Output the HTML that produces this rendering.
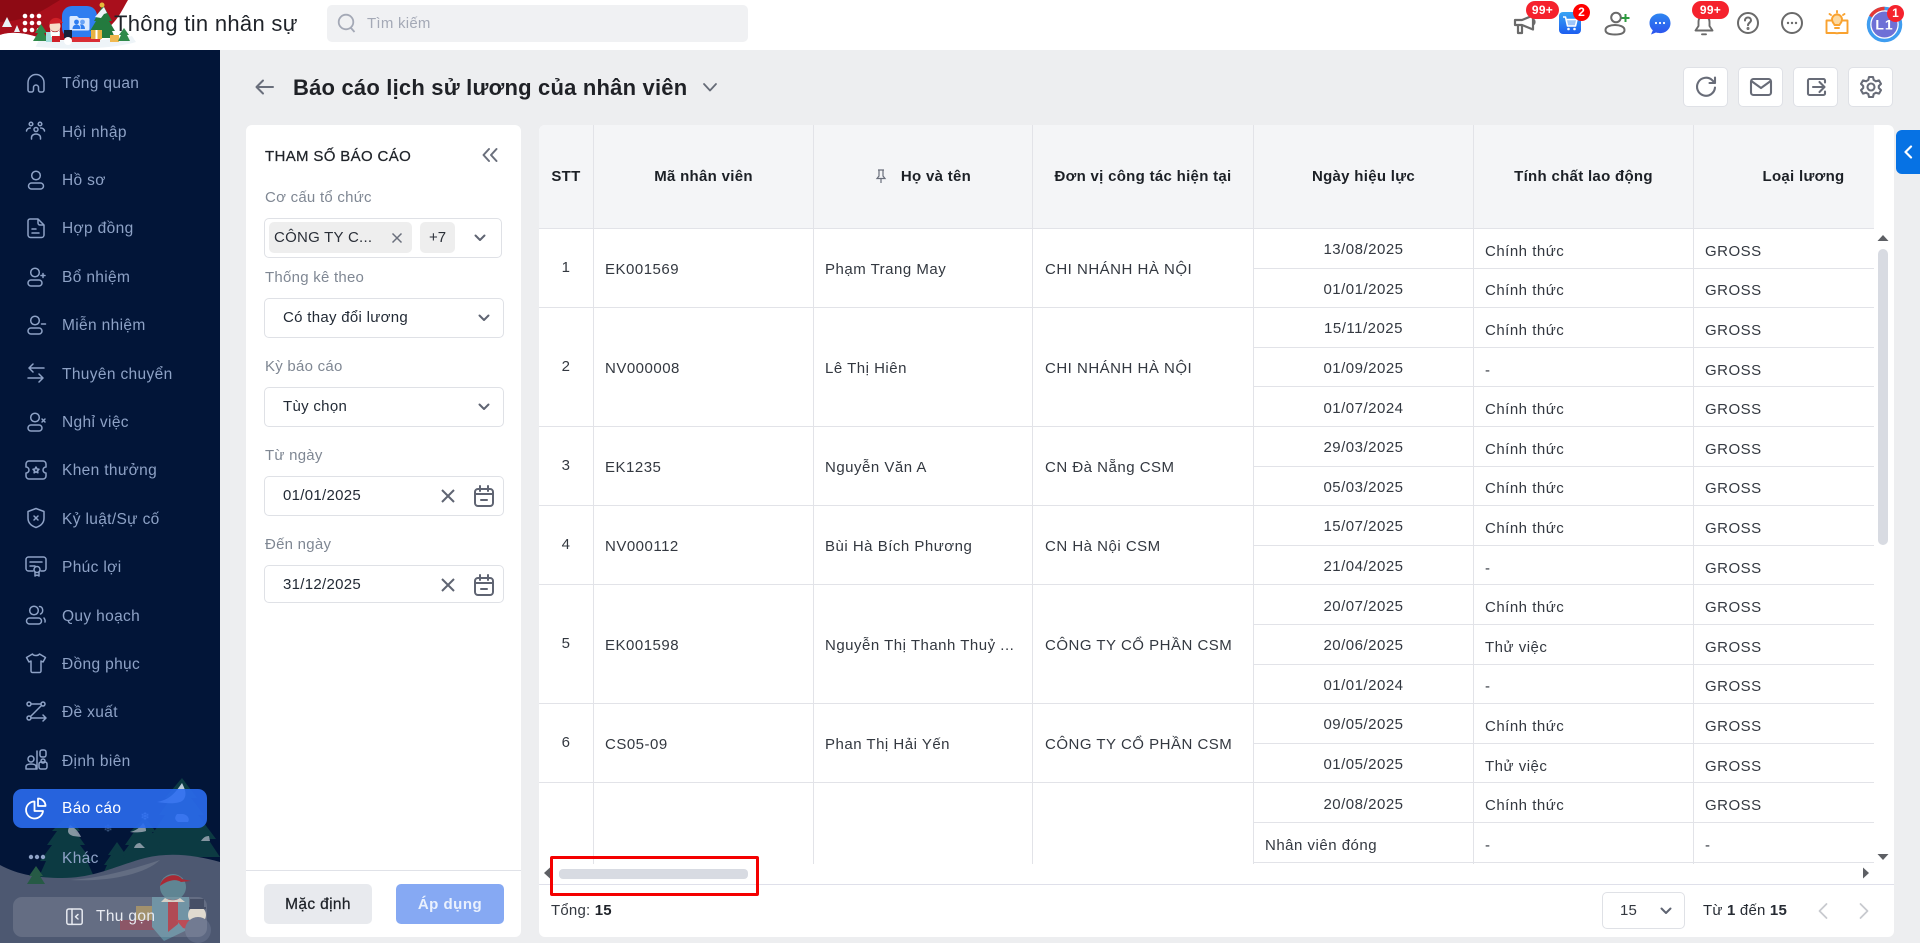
<!DOCTYPE html>
<html lang="vi"><head><meta charset="utf-8"><title>Báo cáo lịch sử lương của nhân viên</title>
<style>
*{box-sizing:border-box}
html,body{margin:0;padding:0;width:1920px;height:943px;overflow:hidden;background:#edeef0;font-family:"Liberation Sans",sans-serif;color:#1f2329}
.a{position:absolute}
svg{display:block;overflow:visible}
#top{left:0;top:0;width:1920px;height:50px;background:#fff}
#side{left:0;top:50px;width:220px;height:893px;background:#021538}
.mi{position:absolute;left:62px;font-size:15.5px;letter-spacing:.35px;color:#8ea2c6;line-height:20px;white-space:nowrap;z-index:3}
.ic{position:absolute;left:24px;width:24px;height:24px;fill:none;stroke:#8ea2c6;stroke-width:1.5;stroke-linecap:round;stroke-linejoin:round;z-index:3}
.panel{background:#fff;border-radius:6px}
.lab{position:absolute;left:265px;font-size:15px;letter-spacing:.25px;color:#7f8793;line-height:20px;white-space:nowrap}
.box{position:absolute;left:264px;width:240px;border:1px solid #dfe1e6;border-radius:5px;background:#fff}
.val{position:absolute;left:283px;font-size:15px;letter-spacing:.3px;color:#222a35;line-height:20px;white-space:nowrap}
.chev{position:absolute;width:12px;height:8px;fill:none;stroke:#5f6472;stroke-width:2;stroke-linecap:round;stroke-linejoin:round}
.tb{position:absolute;top:67px;width:45px;height:40px;background:#fff;border:1px solid #dfe1e6;border-radius:5px}
.tb svg{position:absolute;left:10px;top:7px;width:24px;height:24px;fill:none;stroke:#686c78;stroke-width:2.1;stroke-linecap:round;stroke-linejoin:round}
.bdg{position:absolute;background:#f5222d;color:#fff;font-weight:bold;font-size:12px;text-align:center;border-radius:10px;line-height:18px;height:18px;letter-spacing:.3px}
#wrap{left:539px;top:125px;width:1335px;height:739px;overflow:hidden;border-radius:6px 0 0 0}
table{border-collapse:separate;border-spacing:0;table-layout:fixed;width:1375px}
th{height:104px;background:#f4f5f7;border-right:1px solid #e2e3e8;border-bottom:1px solid #e2e3e8;font-size:15px;letter-spacing:.3px;color:#1c2026;font-weight:bold;padding:0;text-align:center}
td{height:39.6px;border-right:1px solid #e2e3e8;border-bottom:1px solid #e2e3e8;font-size:15px;letter-spacing:.5px;color:#333840;padding:0 0 0 11px;white-space:nowrap;overflow:hidden;background:#fff}
td.c{text-align:center;padding:3px 0 0}
td.s{padding:0 0 1px;text-align:center}
td.m{padding-top:3px}
td.n{padding-top:6px}
td.m:nth-child(4){padding-left:12px}
</style></head><body>

<div class="a" id="top">
<svg class="a" style="left:0;top:0" width="140" height="50" viewBox="0 0 140 50">
<path d="M0 0H128C122 10 118 20 108 28L100 40H0Z" fill="#a90f1c"/>
<path d="M0 0H60C40 12 30 20 0 22Z" fill="#8e0a14"/>
<path d="M0 35C12 31 26 33 40 38C60 42 100 42 132 36L136 42C110 50 60 50 30 46C18 44 8 40 0 38Z" fill="#eef4f8"/>
<path d="M0 35C12 31 26 33 40 38L34 50H0Z" fill="#fff"/>
<path d="M7 17l5 10H2zM17 25l3 7h-6z" fill="#eaf2f6"/>
<g fill="#fff"><circle cx="25" cy="16" r="2.3"/><circle cx="32" cy="16" r="2.3"/><circle cx="39" cy="16" r="2.3"/><circle cx="25" cy="23" r="2.3"/><circle cx="32" cy="23" r="2.3"/><circle cx="39" cy="23" r="2.3"/><circle cx="25" cy="30" r="2.3"/><circle cx="32" cy="30" r="2.3"/><circle cx="39" cy="30" r="2.3"/></g>
<rect x="62" y="6" width="35" height="32" rx="10" fill="#2f7df0"/>
<path d="M71 16h6l2 2h9a1.5 1.5 0 0 1 1.500 1.500V29a1.500 1.500 0 0 1-1.500 1.500H71a1.500 1.500 0 0 1-1.500-1.500V17.500A1.500 1.500 0 0 1 71 16Z" fill="#dbe9ff"/>
<circle cx="76.500" cy="22" r="2.400" fill="#2f7df0"/><circle cx="82.500" cy="22" r="2.400" fill="#6aa3f5"/><path d="M72.500 29c0-3 2-4.500 4-4.500s4 1.500 4 4.500zM81 29c0-2.500-.5-3.500-1-4.500 2.500-.5 5 .8 5 4.500z" fill="#2f7df0"/>
<path d="M66 37h34v5H66z" fill="#d92d35"/>
<path d="M41 24l6 9h-3l5 8H33l5-8h-3z" fill="#2f8a4a"/>
<rect x="46" y="32" width="14" height="10" fill="#a8e0e0"/>
<circle cx="55" cy="26" r="5.500" fill="#f7dcc8"/><path d="M49 24c1-6 8-8 12-4l2 3z" fill="#cf2028"/><path d="M50 28c2 6 8 6 10 0l-1 9h-8z" fill="#fff"/><path d="M52 36h8v6h-8z" fill="#cf2028"/>
<path d="M64 30h8v8h-8z" fill="#17213a"/><circle cx="68" cy="41" r="4" fill="#fff"/>
<path d="M103 5l9 16h-3l6 10h-3l3 7H90l3-7h-3l6-10h-2z" fill="#237a3e"/><path d="M101 10l3-3 3 6-3 1-3 4-6-1z" fill="#eef4f8"/><circle cx="102" cy="5" r="2.500" fill="#e8b93a"/>
<rect x="91" y="30" width="11" height="9" fill="#e8b342"/><rect x="95.500" y="30" width="2" height="9" fill="#fff"/>
<rect x="110" y="35" width="9" height="7" fill="#f0b84f"/>
<path d="M124 28l5 7h-2l3 6h-12l3-6h-2z" fill="#2f8a4a"/>
</svg>
<div class="a" style="left:114px;top:10px;font-size:22px;letter-spacing:.3px;line-height:28px;color:#1f2329;white-space:nowrap">Thông tin nhân sự</div>
<div class="a" style="left:327px;top:5px;width:421px;height:37px;background:#f0f1f3;border-radius:5px"></div>
<svg class="a" style="left:337px;top:13px;width:20px;height:21px;fill:none;stroke:#a4a9b6;stroke-width:1.800"><circle cx="9" cy="9" r="7.300"/><path d="M14 15l3.500 4"/></svg>
<div class="a" style="left:367px;top:14px;font-size:15px;letter-spacing:.25px;line-height:20px;color:#a4a9b6">Tìm kiếm</div>

<svg class="a" style="left:1513px;top:14px;width:24px;height:22px;fill:none;stroke:#6a6a6a;stroke-width:2.200;stroke-linejoin:round" viewBox="0 0 24 22"><path d="M2 6h7l11-4.500v14L9 11H2zM5 11v8h4v-7.500"/><path d="M20 5.500c2 1 2 4 0 5"/></svg>
<div class="bdg" style="left:1526px;top:1px;width:33px">99+</div>
<svg class="a" style="left:1559px;top:12px;width:22px;height:22px" viewBox="0 0 22 22"><defs><linearGradient id="cg" x1="0" y1="0" x2="0" y2="1"><stop offset="0" stop-color="#38a4f4"/><stop offset="1" stop-color="#1d5ef0"/></linearGradient></defs><rect width="22" height="22" rx="4" fill="url(#cg)"/><path d="M4 5h2.500l2 9h8l1.500-6.500H7" fill="none" stroke="#fff" stroke-width="1.600" stroke-linejoin="round"/><path d="M7 8h10.500l-1.200 5.500H8.300z" fill="#fff" opacity=".55"/><circle cx="9.500" cy="17" r="1.300" fill="#fff"/><circle cx="15.500" cy="17" r="1.300" fill="#fff"/></svg>
<div class="a" style="left:1573px;top:4px;width:17px;height:17px;border-radius:50%;background:#f00;color:#fff;font-weight:bold;font-size:12px;text-align:center;line-height:17px">2</div>
<svg class="a" style="left:1604px;top:11px;width:27px;height:25px;fill:none;stroke:#6a6a6a;stroke-width:2" viewBox="0 0 27 25"><circle cx="12" cy="6.500" r="4.800"/><path d="M1.500 19c0-3.500 5-5 9.500-5s9.500 1.500 9.500 5-4 4.500-9.500 4.500S1.500 22.500 1.500 19Z"/><path d="M21.500 3v8M17.500 7h8" stroke="#2d9a3e" stroke-width="2"/></svg>
<svg class="a" style="left:1649px;top:13px;width:22px;height:22px" viewBox="0 0 22 22"><defs><linearGradient id="mg" x1="0" y1="0" x2="0" y2="1"><stop offset="0" stop-color="#2f86f0"/><stop offset="1" stop-color="#2b52ee"/></linearGradient></defs><path d="M11 0.500C5 .5.500 4.500.500 10c0 3 1.200 5.500 3.300 7.300L2 21.500l5-2c1.200.4 2.600.6 4 .6 6 0 10.500-4.300 10.500-10S17 .5 11 .5Z" fill="url(#mg)"/><g fill="#fff"><circle cx="7" cy="10" r="1.100"/><circle cx="11" cy="10" r="1.100"/><circle cx="15" cy="10" r="1.100"/></g></svg>
<svg class="a" style="left:1693px;top:14px;width:22px;height:22px;fill:none;stroke:#6a6a6a;stroke-width:1.900;stroke-linejoin:round" viewBox="0 0 22 22"><path d="M11 2c-3.500 0-5.500 2.500-5.500 6v4L2.500 16.500h17L16.500 12V8c0-3.500-2-6-5.500-6Z"/><path d="M9 20.300h4" stroke-linecap="round"/></svg>
<div class="bdg" style="left:1692px;top:1px;width:37px">99+</div>
<svg class="a" style="left:1737px;top:12px;width:22px;height:22px;fill:none;stroke:#6a6a6a;stroke-width:2" viewBox="0 0 22 22"><circle cx="11" cy="11" r="10"/><path d="M8 8.500c0-2 1.400-3 3-3s3 1 3 2.800c0 2.400-3 2.400-3 5" stroke-linecap="round"/><circle cx="11" cy="16.500" r=".5" fill="#6a6a6a"/></svg>
<svg class="a" style="left:1781px;top:12px;width:22px;height:22px;fill:none;stroke:#6a6a6a;stroke-width:2" viewBox="0 0 22 22"><circle cx="11" cy="11" r="10"/><g fill="#6a6a6a" stroke="none"><circle cx="7" cy="11" r="1.200"/><circle cx="11" cy="11" r="1.200"/><circle cx="15" cy="11" r="1.200"/></g></svg>
<svg class="a" style="left:1825px;top:10px;width:24px;height:24px;fill:none;stroke:#f9a22f;stroke-width:1.900;stroke-linecap:round;stroke-linejoin:round" viewBox="0 0 24 24"><path d="M6 10.500H1.500V23h8c1.500 0 2.500.3 2.500.3s1-.3 2.500-.3h8V10.500H18"/><path d="M9.500 15c0-1-2.500-2.500-2.500-5.500a5 5 0 0 1 10 0c0 3-2.500 4.500-2.500 5.500z" fill="#fdd9a0"/><path d="M12 1v1.500M4.500 4l1.500 1M19.500 4l-1.500 1"/><path d="M10 18h4"/></svg>
<svg class="a" style="left:1866px;top:6px;width:37px;height:37px" viewBox="0 0 37 37"><circle cx="18.500" cy="18.500" r="16" fill="#fff" stroke="#3f9df0" stroke-width="3.500"/><path d="M4.600 10.500A16 16 0 0 1 18.500 2.500" fill="none" stroke="#e53935" stroke-width="3.500"/><circle cx="18.500" cy="18.500" r="13" fill="#6e70d6"/><text x="18.500" y="23.500" text-anchor="middle" font-family="Liberation Sans" font-size="14" font-weight="bold" letter-spacing="1" fill="#fff">L1</text></svg>
<div class="a" style="left:1887px;top:5px;width:17px;height:17px;border-radius:50%;background:#f5222d;color:#fff;font-weight:bold;font-size:12px;text-align:center;line-height:17px">1</div>
</div>

<div class="a" id="side"></div>
<!-- trees below the active pill -->
<svg class="a" style="left:0;top:770px;z-index:1" width="220" height="173" viewBox="0 0 220 173">
<g fill="#0c3a42">
<path d="M182 8l15 20h-6l13 17h-6l18 24h-8l12 18H146l10-18h-7l16-24h-6l12-17h-6z"/>
<path d="M68 45l12 16h-5l10 14h-5l12 16h-5l8 18H38l8-18h-6l12-16h-5l10-14h-5z"/>
<path d="M145 47l11 15h-4l9 13h-4l12 16h-5l8 16H114l8-16h-5l12-16h-4l9-13h-4z"/>
<path d="M117 72l9 13h-3l7 10h-3l5 11h-30l5-11h-3l7-10h-3z"/>
</g>
<path d="M182 13c-8 12-14 17-25 19 12 2 24 2 27-3 3-5 1-10-2-16ZM177 44c-3 4-2 6 1 8h10c2-3 0-7-5-8Z" fill="#e8f0ff" opacity=".8"/>
<path d="M70 55c-3 6-3 9 3 11l8 1c-2-5-6-9-11-12ZM143 53c-3 5-8 8-13 9 6 1 14 0 16-1 0-3-1-6-3-8ZM209 66c-4 0-6 2-8 5h9zM140 73c-3 0-5 2-6 5h11z" fill="#aeb5c2" opacity=".75"/>
<text x="145" y="50" font-size="11" fill="#b6c4dc" font-family="DejaVu Sans" text-anchor="middle">❄</text>
<text x="108" y="62" font-size="11" fill="#3f5c84" font-family="DejaVu Sans" text-anchor="middle">❄</text>
</svg>
<div class="a" style="left:13px;top:789px;width:194px;height:39px;background:rgba(42,108,240,.9);border-radius:9px;z-index:2"></div>
<svg class="a" style="left:0;top:770px;z-index:2" width="220" height="173" viewBox="0 0 220 173">
<path d="M0 95C18 105 40 108 62 108 95 108 115 96 145 88 170 82 195 85 220 92V173H0Z" fill="#4d5871"/>
<path d="M70 110c30-2 60-10 90-20-15 14-50 22-90 20Z" fill="#636d82"/>
<path d="M36 96l7 10h-3l5 8H27l5-8h-3z" fill="#265a45"/>
<path d="M120 150h45v10h-45z" fill="#8f3244" opacity=".7"/><rect x="136" y="136" width="17" height="14" fill="#b3934f" opacity=".7"/>
<path d="M152 127h37v32l-25 12-12-14z" fill="#5c8598"/><path d="M168 127h10v27l-10 8z" fill="#a5303c"/>
<circle cx="173" cy="117" r="13" fill="#5f8593"/><path d="M160 116c2-11 17-14 22-7l9 2-10 1c-6-4-14-1-21 4Z" fill="#a82a35"/><path d="M165 128c5 3 11 3 15 0l5 4H161z" fill="#cfc9bf"/>
<path d="M176 150h22v12l-15-4z" fill="#b3323e"/>
<circle cx="197" cy="145" r="9" fill="#dcd5c8"/><path d="M190 137v-8h14v8z" fill="#2b3550"/><path d="M189 137h17v2h-17z" fill="#2b3550"/>
<circle cx="198" cy="160" r="13" fill="#5d6882"/>
</svg>
<div class="a" style="left:13px;top:897px;width:194px;height:40px;background:rgba(255,255,255,.13);border-radius:9px;z-index:2"></div>
<svg class="a" style="left:66px;top:908px;width:18px;height:18px;z-index:3;fill:none;stroke:#e6e9f0;stroke-width:1.500;stroke-linejoin:round;stroke-linecap:round"><rect x=".8" y="1" width="15.400" height="15.400" rx="2"/><path d="M6 1v15.400M12 6.500L9.500 8.700 12 11"/></svg>
<div class="mi" style="left:96px;top:907px;color:#e8ebf2">Thu gọn</div>

<svg class="ic" style="top:71px" viewBox="0 0 24 24"><path d="M4 19v-7c0-5 3.500-8.500 8-8.500s8 3.500 8 8.500v7a2 2 0 0 1-2 2h-1.500a2 2 0 0 1-2-2v-2.500a2.500 2.500 0 0 0-5 0V19a2 2 0 0 1-2 2H6a2 2 0 0 1-2-2Z"/></svg>
<div class="mi" style="top:74px">Tổng quan</div>
<svg class="ic" style="top:119px" viewBox="0 0 24 24"><circle cx="7" cy="5" r="1.800"/><circle cx="16" cy="5" r="1.800"/><circle cx="12" cy="10.500" r="2"/><path d="M2.500 12c.3-2 2-3 3.800-3M20.500 12c-.3-2-2-3-3.800-3M7.500 20v-1.500c0-2 2-3.500 4.500-3.500s4.500 1.500 4.500 3.500V20"/></svg>
<div class="mi" style="top:123px">Hội nhập</div>
<svg class="ic" style="top:168px" viewBox="0 0 24 24"><circle cx="12" cy="7.500" r="4.300"/><rect x="4.500" y="15" width="15" height="6" rx="3"/></svg>
<div class="mi" style="top:171px">Hồ sơ</div>
<svg class="ic" style="top:216px" viewBox="0 0 24 24"><path d="M6 3h8l6 6v10a2.500 2.500 0 0 1-2.500 2.500h-11A2.500 2.500 0 0 1 4 19V5a2 2 0 0 1 2-2Z"/><path d="M14 3.500V7a2 2 0 0 0 2 2h3.500M8 13h4M8 17h7"/></svg>
<div class="mi" style="top:219px">Hợp đồng</div>
<svg class="ic" style="top:265px" viewBox="0 0 24 24"><circle cx="11" cy="7.500" r="4.300"/><rect x="4" y="15" width="14" height="6" rx="3"/><path d="M19 8.500v4M17 10.500h4"/></svg>
<div class="mi" style="top:268px">Bổ nhiệm</div>
<svg class="ic" style="top:313px" viewBox="0 0 24 24"><circle cx="11" cy="7.500" r="4.300"/><rect x="4" y="15" width="14" height="6" rx="3"/><path d="M17.500 11h4"/></svg>
<div class="mi" style="top:316px">Miễn nhiệm</div>
<svg class="ic" style="top:361px" viewBox="0 0 24 24"><path d="M9 3L5 7l4 4M5 7h15M15 13l4 4-4 4M19 17H4"/></svg>
<div class="mi" style="top:365px">Thuyên chuyển</div>
<svg class="ic" style="top:410px" viewBox="0 0 24 24"><circle cx="11" cy="7.500" r="4.300"/><rect x="4" y="15" width="14" height="6" rx="3"/><path d="M18 9l3 3M21 9l-3 3"/></svg>
<div class="mi" style="top:413px">Nghỉ việc</div>
<svg class="ic" style="top:458px" viewBox="0 0 24 24"><path d="M5 3h14a3 3 0 0 1 3 3v3a3 3 0 0 0 0 6v3a3 3 0 0 1-3 3H5a3 3 0 0 1-3-3v-3a3 3 0 0 0 0-6V6a3 3 0 0 1 3-3Z"/><path d="M12 9l1 2 2 .300-1.500 1.500.4 2-1.900-1-1.900 1 .4-2L9 11.300l2-.3z"/></svg>
<div class="mi" style="top:461px">Khen thưởng</div>
<svg class="ic" style="top:506px" viewBox="0 0 24 24"><path d="M12 2.500l8 3v6.500c0 5-3.500 8-8 9.500-4.500-1.500-8-4.500-8-9.500V5.500z"/><path d="M10 10l4 4M14 10l-4 4"/></svg>
<div class="mi" style="top:510px">Kỷ luật/Sự cố</div>
<svg class="ic" style="top:554px" viewBox="0 0 24 24"><path d="M9 17H4.500A2.500 2.500 0 0 1 2 14.500v-9A2.500 2.500 0 0 1 4.500 3h15A2.500 2.500 0 0 1 22 5.500v9a2.500 2.500 0 0 1-2.500 2.500H17"/><path d="M6 8h12M6 12h5"/><circle cx="13" cy="15.500" r="3"/><path d="M11 18v4l2-1 2 1v-4"/></svg>
<div class="mi" style="top:558px">Phúc lợi</div>
<svg class="ic" style="top:603px" viewBox="0 0 24 24"><circle cx="10" cy="7.500" r="4.300"/><rect x="2.500" y="15" width="15" height="6" rx="3"/><path d="M15.500 3.500c3.500 0 4.500 5.800 1 7.500M20 15c1 1.500 1.500 2.500 1 4"/></svg>
<div class="mi" style="top:607px">Quy hoạch</div>
<svg class="ic" style="top:651px" viewBox="0 0 24 24"><path d="M8.500 3c1 2 5.500 2 7 0l6 3.500-2.500 4.500-2-1v10a1.500 1.500 0 0 1-1.500 1.500h-7A1.500 1.500 0 0 1 7 20V10l-2 1-2.500-4.500z"/></svg>
<div class="mi" style="top:655px">Đồng phục</div>
<svg class="ic" style="top:699px" viewBox="0 0 24 24"><circle cx="5" cy="5" r="2"/><circle cx="19" cy="5" r="2"/><circle cx="5" cy="19" r="2"/><path d="M7 5h10M17.500 6.500L6.500 17.500M7 19h15M19 16l3 3-3 3"/></svg>
<div class="mi" style="top:703px">Đề xuất</div>
<svg class="ic" style="top:748px" viewBox="0 0 24 24"><circle cx="7" cy="11" r="3"/><path d="M2 21v-2.500c0-1.500 2-2.500 5-2.500s5 1 5 2.500V21zM13 3v18"/><rect x="16" y="2" width="6" height="7" rx="2"/><rect x="15" y="14" width="8" height="7" rx="2"/><circle cx="19" cy="13" r="2"/></svg>
<div class="mi" style="top:752px">Định biên</div>
<svg class="ic" style="top:796px;stroke:#fff;stroke-width:1.800" viewBox="0 0 24 24"><path d="M10.500 5.500A8.500 8.500 0 1 0 19 15h-8.500z"/><path d="M14 2.500V10h7.500C21.500 5.800 18 2.500 14 2.500Z"/></svg>
<div class="mi" style="top:799px;color:#fff">Báo cáo</div>
<svg class="a" style="left:28px;top:853px;z-index:3" width="18" height="8" fill="#8ea2c6"><circle cx="3" cy="4" r="2.200"/><circle cx="9" cy="4" r="2.200"/><circle cx="15" cy="4" r="2.200"/></svg>
<div class="mi" style="top:849px">Khác</div>

<!-- page head -->
<svg class="a" style="left:255px;top:78px;width:20px;height:18px;fill:none;stroke:#6a6f7c;stroke-width:2;stroke-linecap:round;stroke-linejoin:round"><path d="M18 9H2M8 2.500L1.500 9 8 15.500"/></svg>
<div class="a" style="left:293px;top:75px;font-size:22px;font-weight:bold;letter-spacing:.2px;line-height:26px;white-space:nowrap;color:#1f2126">Báo cáo lịch sử lương của nhân viên</div>
<svg class="chev" style="left:703px;top:83px;width:14px;height:9px;stroke-width:1.800;stroke:#666b77"><path d="M1 1l6 6.500L13 1"/></svg>

<div class="tb" style="left:1683px"><svg viewBox="0 0 24 24"><path d="M21 12.500a9 9 0 1 1-3-7.500L21 8M21 2.500V8h-5.500"/></svg></div>
<div class="tb" style="left:1738px"><svg viewBox="0 0 24 24"><rect x="2" y="4" width="20" height="16" rx="2.500"/><path d="M3 6.500l9 6.500 9-6.500"/></svg></div>
<div class="tb" style="left:1793px"><svg viewBox="0 0 24 24"><path d="M21 7.500v-2A1.500 1.500 0 0 0 19.500 4h-14A1.500 1.500 0 0 0 4 5.500v13A1.500 1.500 0 0 0 5.500 20h14a1.500 1.500 0 0 0 1.500-1.500v-2M9 12h11.500M15.500 7l5 5-5 5"/></svg></div>
<div class="tb" style="left:1848px"><svg viewBox="0 0 24 24"><circle cx="12" cy="12" r="3.500"/><path d="M10 2h4l.7 3 2.300 1.300 3-.9 2 3.500-2.200 2.100v2l2.200 2.100-2 3.500-3-.9-2.300 1.300-.7 3h-4l-.7-3L7 17.700l-3 .9-2-3.500L4.200 13v-2L2 8.900l2-3.500 3 .9 2.300-1.300z"/></svg></div>

<!-- left panel -->
<div class="a panel" style="left:246px;top:125px;width:275px;height:812px"></div>
<div class="a" style="left:265px;top:147px;font-size:15px;letter-spacing:.35px;line-height:20px;color:#1f2329;white-space:nowrap;-webkit-text-stroke:.25px #1f2329">THAM SỐ BÁO CÁO</div>
<svg class="a" style="left:482px;top:148px;width:17px;height:14px;fill:none;stroke:#6a6f7c;stroke-width:2;stroke-linecap:round;stroke-linejoin:round"><path d="M7 1L1.500 7 7 13M14.500 1L9 7l5.500 6"/></svg>
<div class="lab" style="top:188px">Cơ cấu tổ chức</div>
<div class="box" style="top:218px;width:238px;height:40px"></div>
<div class="a" style="left:269px;top:222px;width:143px;height:31px;background:#eeeeee;border-radius:5px"></div>
<div class="a" style="left:274px;top:228px;font-size:15px;letter-spacing:.25px;line-height:20px;color:#2a2f38;white-space:nowrap">CÔNG TY C...</div>
<svg class="a" style="left:392px;top:233px;width:10px;height:10px;fill:none;stroke:#6a6f7c;stroke-width:1.500"><path d="M.5.500l9 9M9.500.500l-9 9"/></svg>
<div class="a" style="left:420px;top:222px;width:35px;height:31px;background:#eeeeee;border-radius:5px;text-align:center;font-size:15px;line-height:31px;color:#2a2f38">+7</div>
<svg class="chev" style="left:474px;top:234px"><path d="M1.500 1.500l4.500 4.500 4.500-4.500"/></svg>
<div class="lab" style="top:268px">Thống kê theo</div>
<div class="box" style="top:298px;height:40px"></div>
<div class="val" style="top:308px">Có thay đổi lương</div>
<svg class="chev" style="left:478px;top:314px"><path d="M1.500 1.500l4.500 4.500 4.500-4.500"/></svg>
<div class="lab" style="top:357px">Kỳ báo cáo</div>
<div class="box" style="top:387px;height:40px"></div>
<div class="val" style="top:397px">Tùy chọn</div>
<svg class="chev" style="left:478px;top:403px"><path d="M1.500 1.500l4.500 4.500 4.500-4.500"/></svg>
<div class="lab" style="top:446px">Từ ngày</div>
<div class="box" style="top:476px;height:40px"></div>
<div class="val" style="top:486px">01/01/2025</div>
<svg class="a" style="left:441px;top:489px;width:14px;height:14px;fill:none;stroke:#5f6472;stroke-width:2"><path d="M1 1l12 12M13 1L1 13"/></svg>
<svg class="a" style="left:474px;top:485px;width:20px;height:22px;fill:none;stroke:#5f6472;stroke-width:2;stroke-linecap:round"><rect x="1" y="4" width="18" height="17" rx="3"/><path d="M1 9h18M6 1v5M14 1v5M7 15h6"/></svg>
<div class="lab" style="top:535px">Đến ngày</div>
<div class="box" style="top:565px;height:38px"></div>
<div class="val" style="top:575px">31/12/2025</div>
<svg class="a" style="left:441px;top:578px;width:14px;height:14px;fill:none;stroke:#5f6472;stroke-width:2"><path d="M1 1l12 12M13 1L1 13"/></svg>
<svg class="a" style="left:474px;top:574px;width:20px;height:22px;fill:none;stroke:#5f6472;stroke-width:2;stroke-linecap:round"><rect x="1" y="4" width="18" height="17" rx="3"/><path d="M1 9h18M6 1v5M14 1v5M7 15h6"/></svg>
<div class="a" style="left:246px;top:870px;width:275px;height:1px;background:#e0e2e8"></div>
<div class="a" style="left:264px;top:884px;width:108px;height:40px;background:#e8eaee;border-radius:5px;text-align:center;font-size:15.5px;letter-spacing:.35px;line-height:41px;color:#1f2329;-webkit-text-stroke:.25px #1f2329">Mặc định</div>
<div class="a" style="left:396px;top:884px;width:108px;height:40px;background:#86a9f3;border-radius:5px;text-align:center;font-size:15px;font-weight:bold;letter-spacing:.5px;line-height:41px;color:#eaf1fd">Áp dụng</div>

<!-- table panel -->
<div class="a panel" style="left:539px;top:125px;width:1355px;height:812px"></div>
<div class="a" id="wrap">
<table><colgroup><col style="width:55px"><col style="width:220px"><col style="width:219px"><col style="width:221px"><col style="width:220px"><col style="width:220px"><col style="width:220px"></colgroup>
<thead><tr><th>STT</th><th>Mã nhân viên</th><th><svg style="display:inline-block;vertical-align:-2px;margin-right:14px" width="12" height="14" viewBox="0 0 12 14" fill="none" stroke="#6a6f7c" stroke-width="1.200"><path d="M3 1h6M4 1v6L2 9.500h8L8 7V1M6 9.500V14"/></svg>Họ và tên</th><th>Đơn vị công tác hiện tại</th><th>Ngày hiệu lực</th><th>Tính chất lao động</th><th>Loại lương</th></tr></thead>
<tbody>
<tr><td class="s" rowspan="2">1</td><td class="m" rowspan="2">EK001569</td><td class="m" rowspan="2">Phạm Trang May</td><td class="m" rowspan="2">CHI NHÁNH HÀ NỘI</td><td class="c">13/08/2025</td><td class="n">Chính thức</td><td class="n">GROSS</td></tr>
<tr><td class="c">01/01/2025</td><td class="n">Chính thức</td><td class="n">GROSS</td></tr>
<tr><td class="s" rowspan="3">2</td><td class="m" rowspan="3">NV000008</td><td class="m" rowspan="3">Lê Thị Hiên</td><td class="m" rowspan="3">CHI NHÁNH HÀ NỘI</td><td class="c">15/11/2025</td><td class="n">Chính thức</td><td class="n">GROSS</td></tr>
<tr><td class="c">01/09/2025</td><td class="n">-</td><td class="n">GROSS</td></tr>
<tr><td class="c">01/07/2024</td><td class="n">Chính thức</td><td class="n">GROSS</td></tr>
<tr><td class="s" rowspan="2">3</td><td class="m" rowspan="2">EK1235</td><td class="m" rowspan="2">Nguyễn Văn A</td><td class="m" rowspan="2">CN Đà Nẵng CSM</td><td class="c">29/03/2025</td><td class="n">Chính thức</td><td class="n">GROSS</td></tr>
<tr><td class="c">05/03/2025</td><td class="n">Chính thức</td><td class="n">GROSS</td></tr>
<tr><td class="s" rowspan="2">4</td><td class="m" rowspan="2">NV000112</td><td class="m" rowspan="2">Bùi Hà Bích Phương</td><td class="m" rowspan="2">CN Hà Nội CSM</td><td class="c">15/07/2025</td><td class="n">Chính thức</td><td class="n">GROSS</td></tr>
<tr><td class="c">21/04/2025</td><td class="n">-</td><td class="n">GROSS</td></tr>
<tr><td class="s" rowspan="3">5</td><td class="m" rowspan="3">EK001598</td><td class="m" rowspan="3">Nguyễn Thị Thanh Thuỷ ...</td><td class="m" rowspan="3">CÔNG TY CỔ PHẦN CSM</td><td class="c">20/07/2025</td><td class="n">Chính thức</td><td class="n">GROSS</td></tr>
<tr><td class="c">20/06/2025</td><td class="n">Thử việc</td><td class="n">GROSS</td></tr>
<tr><td class="c">01/01/2024</td><td class="n">-</td><td class="n">GROSS</td></tr>
<tr><td class="s" rowspan="2">6</td><td class="m" rowspan="2">CS05-09</td><td class="m" rowspan="2">Phan Thị Hải Yến</td><td class="m" rowspan="2">CÔNG TY CỔ PHẦN CSM</td><td class="c">09/05/2025</td><td class="n">Chính thức</td><td class="n">GROSS</td></tr>
<tr><td class="c">01/05/2025</td><td class="n">Thử việc</td><td class="n">GROSS</td></tr>
<tr><td rowspan="4"></td><td rowspan="4"></td><td rowspan="4"></td><td rowspan="4"></td><td class="c">20/08/2025</td><td class="n">Chính thức</td><td class="n">GROSS</td></tr>
<tr><td class="n">Nhân viên đóng</td><td class="n">-</td><td class="n">-</td></tr>
<tr><td></td><td></td><td></td></tr>
<tr><td></td><td></td><td></td></tr>
</tbody></table>
</div>

<!-- scrollbars -->
<svg class="a" style="left:1877px;top:234px" width="12" height="8" fill="#5d5f64"><path d="M6 1l5.500 6H.5z"/></svg>
<div class="a" style="left:1878px;top:249px;width:10px;height:296px;background:#d8dbe2;border-radius:5px"></div>
<svg class="a" style="left:1877px;top:853px" width="12" height="8" fill="#5d5f64"><path d="M6 7L.5 1h11z"/></svg>
<svg class="a" style="left:543px;top:867px" width="8" height="12" fill="#5d5f64"><path d="M1 6l6-5.500v11z"/></svg>
<div class="a" style="left:559px;top:869px;width:189px;height:10px;background:#d8dbe2;border-radius:4px"></div>
<svg class="a" style="left:1862px;top:867px" width="8" height="12" fill="#5d5f64"><path d="M7 6L1 .5v11z"/></svg>
<div class="a" style="left:539px;top:884px;width:1355px;height:1px;background:#dfe0ea"></div>
<div class="a" style="left:550px;top:856px;width:209px;height:40px;border:3.500px solid #f40000;border-radius:2px"></div>

<div class="a" style="left:551px;top:901px;font-size:15px;letter-spacing:.2px;line-height:20px;white-space:nowrap;color:#333840">Tổng: <b style="color:#1f2329">15</b></div>
<div class="a" style="left:1602px;top:892px;width:83px;height:37px;border:1px solid #dfe1e6;border-radius:5px"></div>
<div class="a" style="left:1620px;top:901px;font-size:15px;letter-spacing:.1px;line-height:20px;color:#333840">15</div>
<svg class="chev" style="left:1660px;top:907px"><path d="M1.500 1.500l4.500 4.500 4.500-4.500"/></svg>
<div class="a" style="left:1703px;top:901px;font-size:15px;letter-spacing:.2px;line-height:20px;white-space:nowrap;color:#262b33">Từ <b>1</b> đến <b>15</b></div>
<svg class="a" style="left:1818px;top:903px;width:10px;height:16px;fill:none;stroke:#c8cacf;stroke-width:1.800;stroke-linecap:round;stroke-linejoin:round"><path d="M8.500 1L1.500 8l7 7"/></svg>
<svg class="a" style="left:1859px;top:903px;width:10px;height:16px;fill:none;stroke:#c8cacf;stroke-width:1.800;stroke-linecap:round;stroke-linejoin:round"><path d="M1.500 1l7 7-7 7"/></svg>

<div class="a" style="left:1896px;top:130px;width:24px;height:44px;background:#0672e4;border-radius:6px 0 0 6px"></div>
<svg class="a" style="left:1904px;top:145px;width:9px;height:14px;fill:none;stroke:#fff;stroke-width:2.200;stroke-linecap:round;stroke-linejoin:round"><path d="M7 1.500L1.500 7 7 12.500"/></svg>
</body></html>
